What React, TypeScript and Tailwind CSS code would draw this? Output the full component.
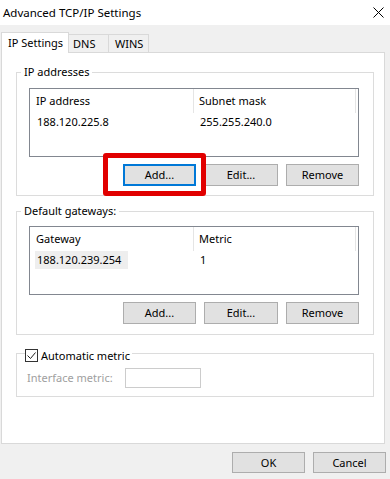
import React from "react";

function Btn({ label, w, focus }: { label: string; w: string; focus?: boolean }) {
	return (
		<div
			className={`${w} h-[22px] flex items-center justify-center bg-[#e1e1e1] text-black ${
				focus ? "border-2 border-[#0078d7]" : "border border-[#adadad]"
			}`}
		>
			{label}
		</div>
	);
}

function ListBox({ cols, row, highlight }: { cols: [string, string]; row: [string, string]; highlight?: boolean }) {
	return (
		<div className="w-[330px] h-[69px] border border-[#828790] bg-white">
			<div className="flex h-[24px]">
				<div className="w-[163px] flex items-center pl-[6px]">{cols[0]}</div>
				<div className="w-[1px] h-[24px] bg-[#e5e5e5]" />
				<div className="w-[161px] flex items-center pl-[5px]">{cols[1]}</div>
				<div className="w-[1px] h-[24px] bg-[#e5e5e5]" />
			</div>
			<div className="flex h-[18px] items-center">
				<div className="w-[164px] flex items-center">
					{highlight ? (
						<span className="ml-[5px] w-[93px] h-[18px] flex items-center pl-[2px] bg-[#eeeeee]">{row[0]}</span>
					) : (
						<span className="pl-[7px]">{row[0]}</span>
					)}
				</div>
				<div className="pl-[6px]">{row[1]}</div>
			</div>
		</div>
	);
}

export default function App() {
	return (
		<div className="relative w-[390px] h-[479px] bg-[#f0f0f0] overflow-hidden font-['Noto_Sans',sans-serif] text-[11px] leading-[16px] text-black">
			{/* title bar */}
			<div className="h-[25px] bg-white flex items-center justify-between pl-[3px] pr-[6px]">
				<span className="text-[11.5px]">Advanced TCP/IP Settings</span>
				<svg width="11" height="11" viewBox="0 0 11 11">
					<path d="M0.5 0.5 L10.5 10.5 M10.5 0.5 L0.5 10.5" stroke="#000" strokeWidth="1" />
				</svg>
			</div>

			{/* tabs */}
			<div className="h-[28px] flex items-end pl-[1px]">
				<div className="relative z-10 w-[68px] h-[21px] bg-white border border-b-0 border-[#d9d9d9] flex items-center pl-[6px]">
					IP Settings
				</div>
				<div className="-ml-px w-[41px] h-[19px] border border-b-0 border-[#d9d9d9] flex items-center pl-[4px]">DNS</div>
				<div className="-ml-px w-[41px] h-[19px] border border-b-0 border-[#d9d9d9] flex items-center pl-[6px]">WINS</div>
			</div>

			{/* panel */}
			<div className="-mt-px ml-[1px] w-[384px] h-[392px] bg-white border border-[#d9d9d9] pt-[11px] pl-[14px]">
				<fieldset className="w-[358px] border border-[#dcdcdc]">
					<legend className="ml-[4px] px-[3px] h-[16px] leading-[16px]">IP addresses</legend>
					<div className="pl-[12px] pt-[8px] pb-[9px]">
						<ListBox cols={["IP address", "Subnet mask"]} row={["188.120.225.8", "255.255.240.0"]} />
						<div className="mt-[7px] flex gap-[8px] pl-[94px]">
							<Btn label="Add..." w="w-[73px]" focus />
							<Btn label="Edit..." w="w-[74px]" />
							<Btn label="Remove" w="w-[73px]" />
						</div>
					</div>
				</fieldset>

				<fieldset className="mt-[7px] w-[358px] border border-[#dcdcdc]">
					<legend className="ml-[4px] px-[3px] h-[16px] leading-[16px]">Default gateways:</legend>
					<div className="pl-[12px] pt-[7px] pb-[10px]">
						<ListBox cols={["Gateway", "Metric"]} row={["188.120.239.254", "1"]} highlight />
						<div className="mt-[7px] flex gap-[8px] pl-[94px]">
							<Btn label="Add..." w="w-[73px]" />
							<Btn label="Edit..." w="w-[74px]" />
							<Btn label="Remove" w="w-[73px]" />
						</div>
					</div>
				</fieldset>

				<fieldset className="mt-[10px] w-[358px] border border-[#dcdcdc]">
					<legend className="ml-[8px] pr-[2px] h-[17px] pt-[4px]">
						<span className="inline-flex items-center h-[13px]">
							<span className="w-[13px] h-[13px] border border-[#333333] bg-white flex items-center justify-center">
								<svg width="11" height="11" viewBox="0 0 11 11">
									<path d="M1.5 5.5 L4.5 8.5 L9.5 2.5" stroke="#222" strokeWidth="1" fill="none" />
								</svg>
							</span>
							<span className="ml-[3px]">Automatic metric</span>
						</span>
					</legend>
					<div className="pl-[10px] pt-[6px] pb-[8px] flex items-center">
						<span className="w-[98px] text-[#a0a0a0]">Interface metric:</span>
						<div className="w-[76px] h-[20px] border border-[#cccccc] bg-white" />
					</div>
				</fieldset>
			</div>

			{/* dialog buttons */}
			<div className="mt-[8px] flex justify-end gap-[8px] pr-[4px]">
				<div className="w-[73px] h-[21px] flex items-center justify-center bg-[#e1e1e1] border border-[#adadad]">OK</div>
				<div className="w-[73px] h-[21px] flex items-center justify-center bg-[#e1e1e1] border border-[#adadad]">Cancel</div>
			</div>

			{/* highlight box */}
			<div className="absolute left-[103px] top-[153px] w-[103px] h-[43px] border-[5px] border-[#e10000] rounded-[3px]" />
		</div>
	);
}
